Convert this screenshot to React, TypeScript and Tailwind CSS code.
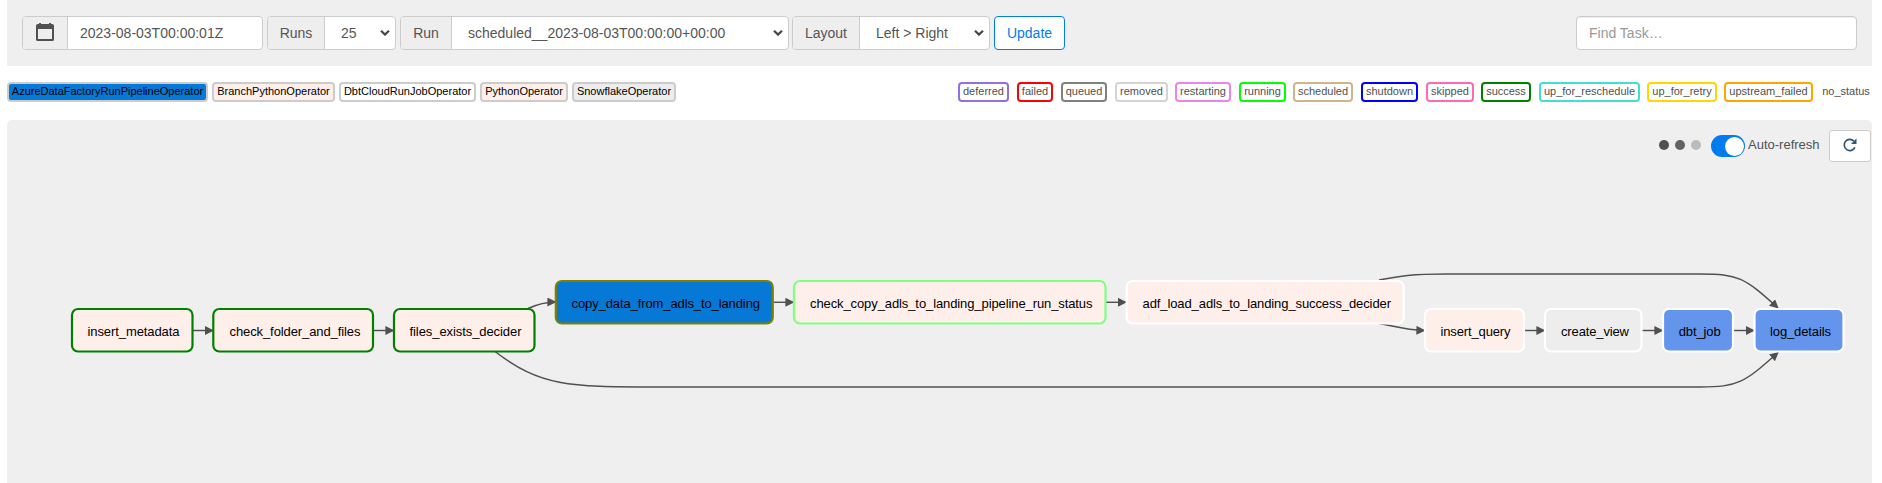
import React from "react";

const operators = [
  { name: "AzureDataFactoryRunPipelineOperator", cls: "w-[201px] bg-[#0678d5]" },
  { name: "BranchPythonOperator", cls: "w-[123px] bg-[#ffefeb]" },
  { name: "DbtCloudRunJobOperator", cls: "w-[137px] bg-white" },
  { name: "PythonOperator", cls: "w-[88px] bg-[#ffefeb]" },
  { name: "SnowflakeOperator", cls: "w-[104px] bg-[#ededed]" },
];

const states = [
  { name: "deferred", cls: "w-[51px] ml-0 border-[#9370db]" },
  { name: "failed", cls: "w-[36px] ml-[8px] border-[#ff0000]" },
  { name: "queued", cls: "w-[46px] ml-[8px] border-[#808080]" },
  { name: "removed", cls: "w-[53px] ml-[8px] border-[#d3d3d3]" },
  { name: "restarting", cls: "w-[56px] ml-[7px] border-[#ee82ee]" },
  { name: "running", cls: "w-[47px] ml-[8px] border-[#00ff00]" },
  { name: "scheduled", cls: "w-[60px] ml-[7px] border-[#d2b48c]" },
  { name: "shutdown", cls: "w-[57px] ml-[8px] border-[#0000ff]" },
  { name: "skipped", cls: "w-[48px] ml-[8px] border-[#ff69b4]" },
  { name: "success", cls: "w-[50px] ml-[7px] border-[#008000]" },
  { name: "up_for_reschedule", cls: "w-[101px] ml-[8px] border-[#40e0d0]" },
  { name: "up_for_retry", cls: "w-[70px] ml-[7px] border-[#ffd700]" },
  { name: "upstream_failed", cls: "w-[89px] ml-[7px] border-[#ffa500]" },
  { name: "no_status", cls: "w-[52px] ml-[7px] border-white" },
];

// x and w describe the stroke's centre line; y is measured from the panel's top.
const nodes = [
  { id: "insert_metadata", x: 72, w: 120.5, y: 189, tx: 87.5, tw: 92, fill: "#ffefeb", stroke: "#008000" },
  { id: "check_folder_and_files", x: 213.3, w: 159.7, y: 189, tx: 229.5, tw: 131, fill: "#ffefeb", stroke: "#008000" },
  { id: "files_exists_decider", x: 394, w: 140.5, y: 189, tx: 409.5, tw: 112, fill: "#ffefeb", stroke: "#008000" },
  { id: "copy_data_from_adls_to_landing", x: 555.8, w: 217, y: 161, tx: 571.5, tw: 188.5, fill: "#0678d5", stroke: "#808000" },
  { id: "check_copy_adls_to_landing_pipeline_run_status", x: 794, w: 311.5, y: 161, tx: 810, tw: 282.5, fill: "#ffefeb", stroke: "#80ff80" },
  { id: "adf_load_adls_to_landing_success_decider", x: 1126.7, w: 277, y: 161, tx: 1142.5, tw: 248.5, fill: "#ffefeb", stroke: "#ffffff" },
  { id: "insert_query", x: 1425, w: 99, y: 189, tx: 1440.5, tw: 70, fill: "#ffefeb", stroke: "#ffffff" },
  { id: "create_view", x: 1545, w: 96.5, y: 189, tx: 1561, tw: 68, fill: "#ededed", stroke: "#ffffff" },
  { id: "dbt_job", x: 1663, w: 70, y: 189, tx: 1678.7, tw: 42, fill: "#6495ed", stroke: "#ffffff" },
  { id: "log_details", x: 1754.5, w: 89, y: 189, tx: 1770, tw: 61, fill: "#6495ed", stroke: "#ffffff" },
];

const edges = [
  "M193 210.5H213",
  "M373.5 210.5H393.5",
  "M528 188.5C538 184 546 182 555.5 182",
  "M773.5 182.3H793.5",
  "M1106 182.3H1126",
  "M1379 203.5C1394 206 1405 210 1424.5 210.5",
  "M1525 210.5H1544.5",
  "M1642 210.5H1662.5",
  "M1733.5 210.5H1754",
  "M1379 160C1400 156 1412 154 1446 154H1700C1738 154 1744 157 1778 188",
  "M495 231.5C540 266 568 267 656 267H1700C1738 267 1744 263 1778 232.5",
];

function Badge({ name, cls }: { name: string; cls: string }) {
  return (
    <span className={`flex h-5 shrink-0 justify-center rounded-[4px] border-2 text-[11px] leading-[15px] whitespace-nowrap ${cls}`}>
      {name}
    </span>
  );
}

function Chevron() {
  return (
    <svg viewBox="0 0 10 6" className="mr-[5px] ml-auto h-[6px] w-[10px] shrink-0 fill-none stroke-[#444] stroke-[2.2]">
      <path d="M1 0.8L5 4.6L9 0.8" />
    </svg>
  );
}

function Field({ label, value, width, labelWidth, pad }: { label: string; value: string; width: string; labelWidth: string; pad: string }) {
  return (
    <div className={`flex h-[34px] overflow-hidden rounded-[4px] border border-[#ccc] bg-white ${width}`}>
      <span className={`flex items-center justify-center border-r border-[#ccc] bg-[#eee] ${labelWidth}`}>{label}</span>
      <div className={`flex flex-1 items-center whitespace-nowrap ${pad}`}>
        {value}
        <Chevron />
      </div>
    </div>
  );
}

function Toolbar() {
  return (
    <div className="flex h-[66px] items-start bg-[#efefef] pt-4 pr-[15px] pl-[15px] text-[14px] text-[#555]">
      <div className="mr-[4px] flex h-[34px] w-[241px] overflow-hidden rounded-[4px] border border-[#ccc] bg-white">
        <span className="flex w-[45px] items-center justify-center border-r border-[#ccc] bg-[#eee]">
          <svg viewBox="0 0 18 19" className="h-[19px] w-[18px] -translate-y-px fill-[#51504f]">
            <path fillRule="evenodd" d="M3 0h2v1h8V0h2v1h1.200Q18 1 18 2.800V16.400Q18 18 16.200 18H1.800Q0 18 0 16.400V2.800Q0 1 1.800 1H3ZM2 6V16H16V6Z" />
          </svg>
        </span>
        <span className="flex items-center pl-3">2023-08-03T00:00:01Z</span>
      </div>
      <div className="mr-[4px]"><Field label="Runs" value="25" width="w-[129px]" labelWidth="w-[57px]" pad="pl-4" /></div>
      <div className="mr-[3px]"><Field label="Run" value="scheduled__2023-08-03T00:00:00+00:00" width="w-[389px]" labelWidth="w-[51px]" pad="pl-4" /></div>
      <div className="mr-[4px]"><Field label="Layout" value="Left > Right" width="w-[198px]" labelWidth="w-[67px]" pad="pl-4" /></div>
      <button className="h-[34px] w-[71px] rounded-[4px] border border-[#017cee] bg-white text-[#017cee]">Update</button>
      <div className="ml-auto flex h-[34px] w-[281px] items-center rounded-[4px] border border-[#ccc] bg-white pl-3 text-[#999] shadow-[inset_0_1px_1px_rgba(0,0,0,0.075)]">
        Find Task…
      </div>
    </div>
  );
}

function Graph() {
  return (
    <svg width="1865" height="363" viewBox="7 0 1865 363" className="block">
      <defs>
        <marker id="arrow" viewBox="0 0 10 10" refX="9" refY="5" markerUnits="userSpaceOnUse" markerWidth="9" markerHeight="9" orient="auto">
          <path d="M0 0L10 5L0 10Z" fill="#51504f" />
        </marker>
      </defs>
      {edges.map((d) => (
        <path key={d} d={d} fill="none" stroke="#51504f" strokeWidth="1.450" markerEnd="url(#arrow)" />
      ))}
      {nodes.map((n) => (
        <g key={n.id}>
          <rect x={n.x} y={n.y} width={n.w} height="42.500" rx="6" fill={n.fill} stroke={n.stroke} strokeWidth="2.200" />
          <text x={n.tx} y={n.y + 26.5} textLength={n.tw} className="fill-black text-[13px]">{n.id}</text>
        </g>
      ))}
    </svg>
  );
}

export default function App() {
  return (
    <div className="h-[483px] w-[1882px] overflow-hidden bg-white pr-[10px] pl-[7px] font-['Liberation_Sans',Arial,sans-serif] text-[#51504f]">
      <Toolbar />
      <div className="flex h-[54px] items-start justify-between pt-4">
        <div className="flex gap-1 text-black">
          {operators.map((o) => <Badge key={o.name} name={o.name} cls={`border-[#ccc] ${o.cls}`} />)}
        </div>
        <div className="flex">
          {states.map((s) => <Badge key={s.name} {...s} />)}
        </div>
      </div>
      <div className="relative h-[363px] rounded-t-[5px] bg-[#efefef]">
        <Graph />
        <div className="absolute top-[10px] right-px flex h-8 items-center text-[13px]">
          <div className="mr-[10px] flex gap-[6px] pb-[2px]">
            <span className="size-[10px] rounded-full bg-[#51504f]" />
            <span className="size-[10px] rounded-full bg-[#646362]" />
            <span className="size-[10px] rounded-full bg-[#bbbbba]" />
          </div>
          <span className="mr-[3px] flex h-[22px] w-[34px] items-center justify-end rounded-full bg-[#017cee] pr-px">
            <span className="size-[19px] rounded-full bg-white" />
          </span>
          <span className="w-[81px] pb-[2px] whitespace-nowrap">Auto-refresh</span>
          <button className="flex h-8 w-[42px] items-center justify-center rounded-[3px] border border-[#ccc] bg-white">
            <svg viewBox="0 0 14 14" className="size-[14px] -translate-y-px">
              <path d="M11.900 9.300A5.600 5.600 0 1 1 11 3.200" fill="none" stroke="#2f5878" strokeWidth="1.700" />
              <path d="M13.500 0.500V6H8Z" fill="#2f5878" />
            </svg>
          </button>
        </div>
      </div>
    </div>
  );
}
